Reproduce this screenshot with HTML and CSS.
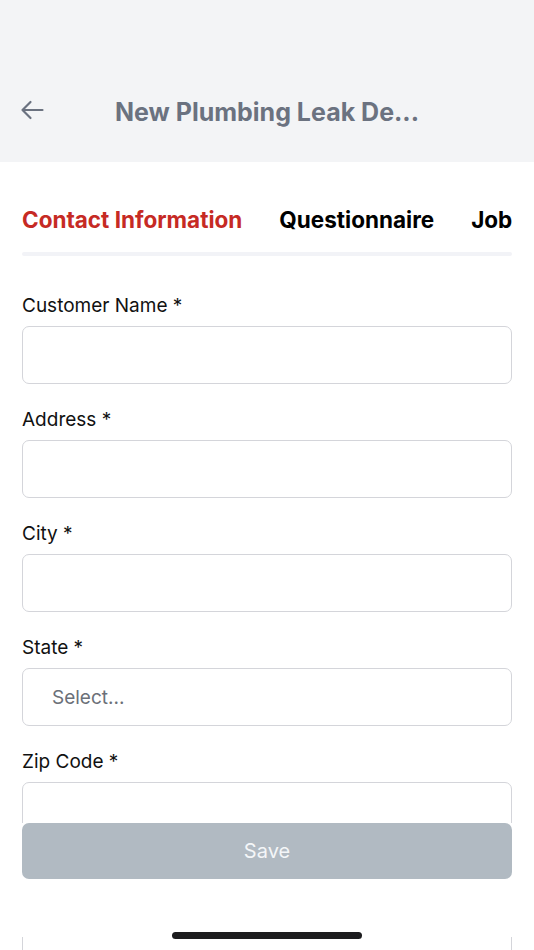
FILE: index.html
```html
<!DOCTYPE html>
<html>
<head>
<meta charset="utf-8">
<link rel="stylesheet" href="styles.css">
</head>
<body>
<div class="screen">
  <header class="topbar">
    <div class="topbar-row">
      <span class="back">
        <svg width="24" height="20" viewBox="0 0 24 20"><path d="M22.5 10H2.5M10.5 2L2.5 10L10.5 18" fill="none" stroke="#6b7280" stroke-width="2.2" stroke-linecap="round" stroke-linejoin="round"/></svg>
      </span>
      <h1 class="title">New Plumbing Leak De...</h1>
      <span></span>
    </div>
  </header>
  <nav class="tabs">
    <div class="tab-list">
      <span class="tab active">Contact Information</span>
      <span class="tab">Questionnaire</span>
      <span class="tab">Jobs</span>
    </div>
    <div class="tab-rail"></div>
  </nav>
  <main class="form">
    <div class="field">
      <label class="label">Customer Name *</label>
      <div class="input"></div>
    </div>
    <div class="field">
      <label class="label">Address *</label>
      <div class="input"></div>
    </div>
    <div class="field">
      <label class="label">City *</label>
      <div class="input"></div>
    </div>
    <div class="field">
      <label class="label">State *</label>
      <div class="input select"><span class="placeholder">Select...</span></div>
    </div>
    <div class="field">
      <label class="label">Zip Code *</label>
      <div class="input"></div>
    </div>
  </main>
  <div class="footer">
    <button class="save">Save</button>
  </div>
  <div class="below">
    <div class="ghost-field"></div>
  </div>
  <div class="home-indicator"></div>
</div>
</body>
</html>
```
FILE: styles.css
```css
* { box-sizing: border-box; }
html, body { margin: 0; padding: 0; background: #ffffff; }
body {
  font-family: Inter, "Noto Sans", "Liberation Sans", sans-serif;
  color: #111111;
}
.screen {
  position: relative;
  width: 534px;
  height: 950px;
  overflow: hidden;
  display: flex;
  flex-direction: column;
}
.screen > * { flex: none; }
.topbar {
  background: #f3f4f6;
  height: 162px;
  padding-top: 93px;
}
.topbar-row {
  display: grid;
  grid-template-columns: 1fr auto 1fr;
  align-items: center;
  height: 38px;
  padding-left: 20px;
}
.back { display: flex; align-items: center; transform: translateY(-2px); }
.title {
  margin: 0;
  font-size: 25px;
  font-weight: 700;
  color: #6b7280;
  letter-spacing: 0;
  transform: translateX(-10px);
}
.tabs {
  padding: 41px 22px 0 22px;
}
.tab-list {
  display: flex;
  gap: 37px;
  overflow: hidden;
  white-space: nowrap;
  height: 32px;
  align-items: center;
}
.tab {
  font-size: 22.5px;
  font-weight: 700;
  color: #000000;
  flex: none;
}
.tab.active { color: #c62a24; }
.tab-rail {
  margin-top: 17px;
  height: 4px;
  background: #f2f3f7;
  border-radius: 2px;
}
.form {
  padding: 36px 22px 0 22px;
  height: 567px;
  overflow: hidden;
  display: flex;
  flex-direction: column;
  gap: 22px;
}
.field {
  display: flex;
  flex-direction: column;
  gap: 8px;
  flex: none;
}
.label {
  font-size: 19px;
  line-height: 24px;
  margin-top: 2px;
  color: #111111;
}
.input {
  height: 58px;
  border: 1.5px solid #d4d5da;
  border-radius: 7px;
  background: #ffffff;
  display: flex;
  align-items: center;
}
.select { padding-left: 29px; }
.placeholder {
  font-size: 19px;
  color: #6b7078;
}
.footer {
  padding: 0 22px;
}
.save {
  width: 100%;
  height: 56px;
  border: none;
  border-radius: 7px;
  background: #b1bac2;
  color: #f4f6f8;
  font-family: inherit;
  font-size: 20px;
  display: block;
}
.below {
  padding: 58px 22px 0 22px;
  flex: 1;
}
.ghost-field {
  height: 40px;
  border-left: 1.5px solid #d4d5da;
  border-right: 1.5px solid #d4d5da;
}
.home-indicator {
  position: absolute;
  left: 172px;
  top: 932px;
  width: 190px;
  height: 7px;
  border-radius: 4px;
  background: #1c1c1e;
}
```
